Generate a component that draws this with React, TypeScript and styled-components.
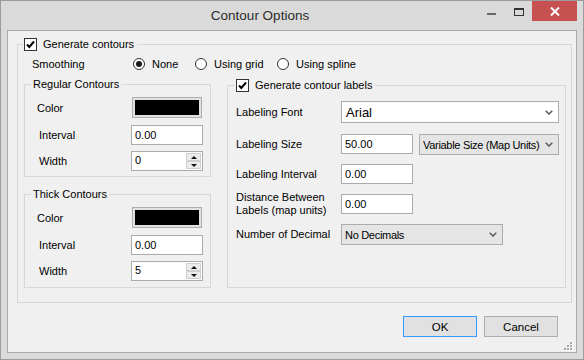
import React from "react";
import styled, { createGlobalStyle } from "styled-components";

const GlobalStyle = createGlobalStyle`
  html, body {
    margin: 0;
    padding: 0;
    background: #dadada;
  }
  body {
    font-family: "Liberation Sans", Arial, sans-serif;
    font-size: 11px;
    color: #000;
  }
`;

const Window = styled.div`
  box-sizing: border-box;
  width: 584px;
  height: 360px;
  border: 1px solid #9c9c9c;
  background: #dadada;
  padding: 0 6px 6px;
  display: flex;
  flex-direction: column;
`;

const TitleBar = styled.div`
  height: 29px;
  display: flex;
  align-items: flex-start;
`;

const Title = styled.div`
  flex: 1;
  text-align: center;
  padding-left: 35px;
  line-height: 30px;
  font-size: 13.5px;
  color: #2b2b2b;
`;

const Controls = styled.div`
  display: flex;
  height: 20px;
`;

const CaptionButton = styled.div<{ $w: number; $top: number; $danger?: boolean }>`
  width: ${(p) => p.$w}px;
  height: 20px;
  box-sizing: border-box;
  padding-top: ${(p) => p.$top}px;
  display: flex;
  justify-content: center;
  align-items: flex-start;
  background: ${(p) => (p.$danger ? "#c75050" : "transparent")};
`;

const MinGlyph = styled.div`
  width: 9px;
  height: 2px;
  background: #6a6a6a;
`;

const MaxGlyph = styled.div`
  box-sizing: border-box;
  width: 10px;
  height: 8px;
  border: 1px solid #333;
  border-top-width: 2px;
`;

const Client = styled.div`
  position: relative;
  box-sizing: border-box;
  height: 323px;
  border: 1px solid #a9a9a9;
  background: #f0f0f0;
  display: flex;
  flex-direction: column;
`;

const MainGroup = styled.fieldset`
  box-sizing: border-box;
  width: 555px;
  margin: 6px 0 0 9px;
  padding: 0;
  min-width: 0;
  border: 1px solid #d7d7d7;
`;

const GroupLegend = styled.legend<{ $offset: number }>`
  display: flex;
  align-items: center;
  gap: 6px;
  height: 14px;
  line-height: 14px;
  margin-left: ${(p) => p.$offset}px;
  padding: 0 3px 0 1px;
`;

const MainBody = styled.div`
  padding: 6px 0 14px 6px;
`;

const SmoothingRow = styled.div`
  display: flex;
  align-items: center;
  height: 14px;
  padding-left: 8px;
`;

const SmoothingLabel = styled.span`
  width: 101px;
`;

const RadioOption = styled.label<{ $w?: number }>`
  display: flex;
  align-items: center;
  gap: 7px;
  width: ${(p) => (p.$w ? `${p.$w}px` : "auto")};
`;

const RadioCircle = styled.span<{ $on?: boolean }>`
  box-sizing: border-box;
  width: 12px;
  height: 12px;
  border-radius: 50%;
  border: 1px solid #333;
  background: #fff;
  display: flex;
  align-items: center;
  justify-content: center;
  &::after {
    content: "";
    width: 6px;
    height: 6px;
    border-radius: 50%;
    background: ${(p) => (p.$on ? "#1a1a1a" : "transparent")};
  }
`;

const Columns = styled.div`
  display: flex;
  align-items: stretch;
  margin-top: 6px;
`;

const LeftColumn = styled.div`
  width: 187px;
  display: flex;
  flex-direction: column;
  gap: 10px;
`;

const SubGroup = styled.fieldset`
  box-sizing: border-box;
  margin: 0;
  padding: 0;
  min-width: 0;
  border: 1px solid #d7d7d7;
`;

const SubLegend = styled.legend`
  height: 14px;
  line-height: 14px;
  margin-left: 6px;
  padding: 0 2px;
`;

const SubBody = styled.div<{ $pb: number }>`
  display: grid;
  grid-template-columns: 94px 72px;
  row-gap: 6px;
  padding: 6px 0 ${(p) => p.$pb}px 12px;
`;

const FieldLabel = styled.span<{ $indent?: number }>`
  align-self: center;
  padding-left: ${(p) => p.$indent ?? 0}px;
  line-height: 13px;
  white-space: nowrap;
`;

const ColorButton = styled.div`
  box-sizing: border-box;
  width: 70px;
  height: 21px;
  margin: 0 0 1px 1px;
  border: 1px solid #adadad;
  background: #e1e1e1;
  padding: 2px;
  &::after {
    content: "";
    display: block;
    width: 100%;
    height: 100%;
    background: #000;
  }
`;

const TextBox = styled.div<{ $w?: number }>`
  box-sizing: border-box;
  width: ${(p) => p.$w ?? 72}px;
  height: 20px;
  border: 1px solid #ababab;
  background: #fff;
  padding: 0 3px;
  line-height: 18px;
`;

const SpinBox = styled.div`
  box-sizing: border-box;
  width: 72px;
  height: 20px;
  border: 1px solid #ababab;
  background: #fff;
  display: flex;
  padding: 1px 1px 1px 3px;
`;

const SpinValue = styled.span`
  flex: 1;
  line-height: 14px;
`;

const SpinButtons = styled.div`
  width: 15px;
  display: flex;
  flex-direction: column;
`;

const SpinButton = styled.div<{ $down?: boolean }>`
  flex: 1;
  box-sizing: border-box;
  border: 1px solid #cfcfcf;
  background: #ececec;
  display: flex;
  align-items: center;
  justify-content: center;
  &::after {
    content: "";
    border-left: 3px solid transparent;
    border-right: 3px solid transparent;
    ${(p) =>
      p.$down ? "border-top: 3px solid #111;" : "border-bottom: 3px solid #111;"}
  }
`;

const RightGroup = styled.fieldset`
  box-sizing: border-box;
  width: 339px;
  margin: 1px 0 0 16px;
  padding: 0;
  min-width: 0;
  border: 1px solid #d7d7d7;
`;

const RightBody = styled.div`
  display: grid;
  grid-template-columns: 105px auto;
  grid-template-rows: 23px 20px 20px 20px 21px;
  row-gap: 10px;
  padding: 9px 0 0 8px;
  align-items: start;
`;

const FieldGroup = styled.div`
  display: flex;
  gap: 6px;
`;

const Combo = styled.div<{ $w: number; $h: number; $flat?: boolean; $big?: boolean }>`
  box-sizing: border-box;
  width: ${(p) => p.$w}px;
  height: ${(p) => p.$h}px;
  border: 1px solid ${(p) => (p.$flat ? "#acacac" : "#ababab")};
  background: ${(p) => (p.$flat ? "#e5e5e5" : "#fff")};
  display: flex;
  align-items: center;
  gap: 3px;
  padding: 0 5px 0 ${(p) => (p.$big ? 4 : 3)}px;
  font-size: ${(p) => (p.$big ? 13 : 11)}px;
  letter-spacing: ${(p) => (p.$big ? 0 : -0.3)}px;
`;

const ComboText = styled.span`
  flex: 1;
  min-width: 0;
  overflow: hidden;
  white-space: nowrap;
`;

const Footer = styled.div`
  display: flex;
  justify-content: flex-end;
  gap: 7px;
  margin-top: 13px;
  padding-right: 18px;
`;

const DialogButton = styled.div<{ $default?: boolean }>`
  box-sizing: border-box;
  width: 74px;
  height: 21px;
  border: 1px solid ${(p) => (p.$default ? "#3399ff" : "#adadad")};
  background: #e1e1e1;
  display: flex;
  align-items: center;
  justify-content: center;
  font-size: 11.5px;
`;

const SizeGrip = styled.svg`
  position: absolute;
  right: 3px;
  bottom: 1px;
`;

const CheckBox: React.FC = () => (
  <svg width="13" height="13" viewBox="0 0 13 13">
    <rect x="0.5" y="0.5" width="12" height="12" fill="#fff" stroke="#333" />
    <path d="M3 6.5 L5.3 9 L10 3.5" fill="none" stroke="#000" strokeWidth="2" />
  </svg>
);

const Chevron: React.FC = () => (
  <svg width="8" height="5" viewBox="0 0 8 5">
    <path d="M0.7 0.7 L4 4 L7.3 0.7" fill="none" stroke="#5a5a5a" strokeWidth="1.5" />
  </svg>
);

const Radio: React.FC<{ text: string; on?: boolean; w?: number }> = ({ text, on, w }) => (
  <RadioOption $w={w}>
    <RadioCircle $on={on} />
    <span>{text}</span>
  </RadioOption>
);

const Spinner: React.FC<{ value: string }> = ({ value }) => (
  <SpinBox>
    <SpinValue>{value}</SpinValue>
    <SpinButtons>
      <SpinButton />
      <SpinButton $down />
    </SpinButtons>
  </SpinBox>
);

const ContourSet: React.FC<{ title: string; width: string; pb: number }> = ({
  title,
  width,
  pb,
}) => (
  <SubGroup>
    <SubLegend>{title}</SubLegend>
    <SubBody $pb={pb}>
      <FieldLabel>Color</FieldLabel>
      <ColorButton />
      <FieldLabel $indent={2}>Interval</FieldLabel>
      <TextBox>0.00</TextBox>
      <FieldLabel $indent={2}>Width</FieldLabel>
      <Spinner value={width} />
    </SubBody>
  </SubGroup>
);

export default function App() {
  return (
    <>
      <GlobalStyle />
      <Window>
        <TitleBar>
          <Title>Contour Options</Title>
          <Controls>
            <CaptionButton $w={27} $top={12}>
              <MinGlyph />
            </CaptionButton>
            <CaptionButton $w={27} $top={7}>
              <MaxGlyph />
            </CaptionButton>
            <CaptionButton $w={45} $top={6} $danger>
              <svg width="10" height="9" viewBox="0 0 10 9">
                <path d="M1 0.5 L9 8.5 M9 0.5 L1 8.5" stroke="#fff" strokeWidth="2" />
              </svg>
            </CaptionButton>
          </Controls>
        </TitleBar>
        <Client>
          <MainGroup>
            <GroupLegend $offset={5}>
              <CheckBox />
              <span>Generate contours</span>
            </GroupLegend>
            <MainBody>
              <SmoothingRow>
                <SmoothingLabel>Smoothing</SmoothingLabel>
                <Radio text="None" on w={62} />
                <Radio text="Using grid" w={82} />
                <Radio text="Using spline" />
              </SmoothingRow>
              <Columns>
                <LeftColumn>
                  <ContourSet title="Regular Contours" width="0" pb={5} />
                  <ContourSet title="Thick Contours" width="5" pb={6} />
                </LeftColumn>
                <RightGroup>
                  <GroupLegend $offset={7}>
                    <CheckBox />
                    <span>Generate contour labels</span>
                  </GroupLegend>
                  <RightBody>
                    <FieldLabel>Labeling Font</FieldLabel>
                    <Combo $w={218} $h={22} $big>
                      <ComboText>Arial</ComboText>
                      <Chevron />
                    </Combo>
                    <FieldLabel>Labeling Size</FieldLabel>
                    <FieldGroup>
                      <TextBox>50.00</TextBox>
                      <Combo $w={140} $h={21} $flat>
                        <ComboText>Variable Size (Map Units)</ComboText>
                        <Chevron />
                      </Combo>
                    </FieldGroup>
                    <FieldLabel>Labeling Interval</FieldLabel>
                    <TextBox>0.00</TextBox>
                    <FieldLabel>
                      Distance Between
                      <br />
                      Labels (map units)
                    </FieldLabel>
                    <TextBox>0.00</TextBox>
                    <FieldLabel>Number of Decimal</FieldLabel>
                    <Combo $w={162} $h={21} $flat>
                      <ComboText>No Decimals</ComboText>
                      <Chevron />
                    </Combo>
                  </RightBody>
                </RightGroup>
              </Columns>
            </MainBody>
          </MainGroup>
          <Footer>
            <DialogButton $default>OK</DialogButton>
            <DialogButton>Cancel</DialogButton>
          </Footer>
          <SizeGrip width="10" height="10" viewBox="0 0 10 10">
            {[
              [7, 1],
              [4, 4],
              [7, 4],
              [1, 7],
              [4, 7],
              [7, 7],
            ].map(([x, y]) => (
              <g key={`${x}-${y}`}>
                <rect x={x + 1} y={y + 1} width="2" height="2" fill="#fff" />
                <rect x={x} y={y} width="2" height="2" fill="#a8a8a8" />
              </g>
            ))}
          </SizeGrip>
        </Client>
      </Window>
    </>
  );
}
